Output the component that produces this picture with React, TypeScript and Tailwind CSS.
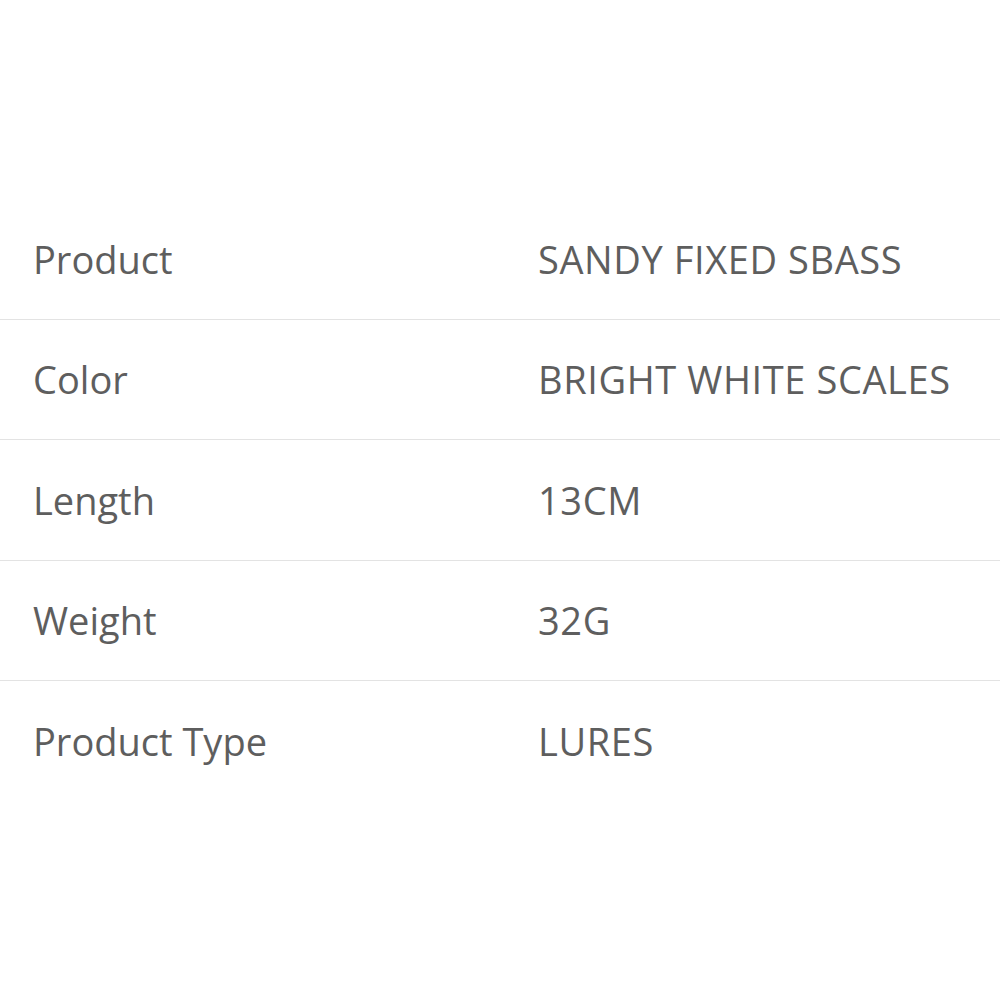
const rows = [
  ["Product", "SANDY FIXED SBASS"],
  ["Color", "BRIGHT WHITE SCALES"],
  ["Length", "13CM"],
  ["Weight", "32G"],
  ["Product Type", "LURES"],
];

export default function App() {
  return (
    <div className="min-h-screen w-[1000px] bg-white pt-[199px] font-['Open_Sans',sans-serif] text-[#5e5e5e]">
      <div className="flex flex-col">
        {rows.map(([label, value], i) => (
          <div
            key={label}
            className={`flex h-[120.5px] items-center text-[38px] leading-none ${
              i < rows.length - 1 ? "border-b border-[#e3e3e3]" : ""
            }`}
          >
            <div className="w-[505px] pl-[33px]">{label}</div>
            <div className="pl-[33px] tracking-[0.6px]">{value}</div>
          </div>
        ))}
      </div>
    </div>
  );
}
